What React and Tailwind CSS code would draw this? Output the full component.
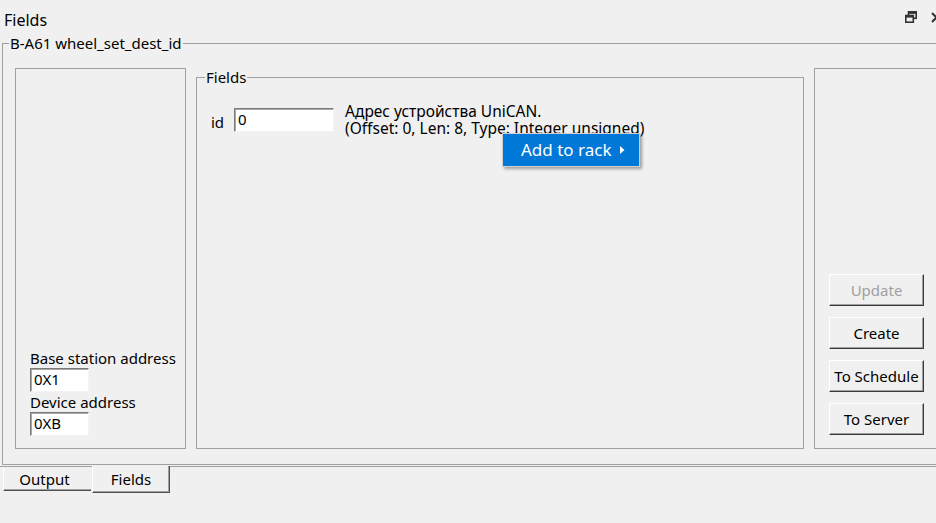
import { useState } from "react";

const FONT = { fontFamily: '"Noto Sans", "Liberation Sans", sans-serif' };

// sunken edit box, classic windows look
const Edit = ({ value, className }) => (
  <div
    className={`h-[24px] bg-white border border-t-[#7a7a7a] border-l-[#7a7a7a] border-r-[#f4f4f4] border-b-[#f4f4f4] shadow-[inset_1px_1px_0_#a8a8a8] pl-[3px] text-[15px] leading-[21px] text-black ${className}`}
  >
    {value}
  </div>
);

const Btn = ({ children, disabled }) => (
  <button
    className={`w-[95px] h-[32px] bg-[#f0f0f0] border border-t-white border-l-white border-r-[#3a3a3a] border-b-[#3a3a3a] shadow-[inset_-1px_-1px_0_#a0a0a0] text-[15px] leading-[20px] ${
      disabled ? "text-[#a0a0a0]" : "text-black"
    }`}
  >
    {children}
  </button>
);

const App = () => {
  const [tab, setTab] = useState("Fields");

  return (
    <div style={FONT} className="w-[936px] h-[523px] bg-[#f0f0f0] text-black overflow-hidden relative">
      {/* Title row */}
      <div className="h-[34px] flex items-start justify-between">
        <div className="pl-[4px] pt-[9px] text-[16px] leading-[22px]">Fields</div>
        <div className="flex items-center gap-[14px] pt-[11px] -mr-[6px]">
          <svg width="12" height="12" viewBox="0 0 12 12" fill="none" stroke="#333" strokeWidth="1.6">
            <rect x="3.5" y="0.8" width="7.7" height="6.5" />
            <rect x="0.8" y="4.5" width="7.5" height="6.7" fill="#f0f0f0" />
            <line x1="0.8" y1="5.6" x2="8.3" y2="5.6" strokeWidth="2" />
            <line x1="3.5" y1="1.9" x2="11.2" y2="1.9" strokeWidth="2" />
          </svg>
          <svg width="11" height="11" viewBox="0 0 11 11" stroke="#333" strokeWidth="2">
            <line x1="1" y1="1" x2="10" y2="10" />
            <line x1="10" y1="1" x2="1" y2="10" />
          </svg>
        </div>
      </div>

      {/* Outer group box */}
      <fieldset className="ml-[2px] w-[960px] h-[431px] border border-[#a0a0a0]">
        <legend className="ml-[6px] px-[1px] text-[15px] leading-[18px]">B-A61 wheel_set_dest_id</legend>

        <div className="flex pl-[12px] pt-[16px] gap-[10px] h-[397px]">
          {/* Left panel */}
          <div className="w-[171px] h-[381px] border border-[#a0a0a0] flex flex-col justify-end pl-[14px] pb-[12px]">
            <div className="text-[15px] leading-[20px]">Base station address</div>
            <Edit value="0X1" className="w-[59px]" />
            <div className="text-[15px] leading-[20px]">Device address</div>
            <Edit value="0XB" className="w-[59px]" />
          </div>

          {/* Fields group */}
          <fieldset className="w-[608px] h-[381px] border border-[#a0a0a0]">
            <legend className="ml-[8px] px-[1px] text-[15px] leading-[18px]">Fields</legend>
            <div className="flex items-start pl-[14px] pt-[22px]">
              <div className="text-[15px] leading-[24px] mr-[10px] mt-[2px]">id</div>
              <Edit value="0" className="w-[100px]" />
              <div className="ml-[11px] -mt-[5px] text-[15.5px] leading-[17px]">
                <div>Адрес устройства UniCAN.</div>
                <div>(Offset: 0, Len: 8, Type: Integer unsigned)</div>
              </div>
            </div>
          </fieldset>

          {/* Buttons panel */}
          <div className="w-[140px] h-[381px] border border-[#a0a0a0] flex flex-col justify-end gap-[11px] pl-[14px] pb-[13px]">
            <Btn disabled>Update</Btn>
            <Btn>Create</Btn>
            <Btn>To Schedule</Btn>
            <Btn>To Server</Btn>
          </div>
        </div>
      </fieldset>

      {/* Tabs */}
      <div className="mt-[1px] border-t border-[#a0a0a0] flex items-start pl-[3px]">
        {["Output", "Fields"].map((t) => {
          const active = tab === t;
          return (
            <button
              key={t}
              onClick={() => setTab(t)}
              className={
                active
                  ? "-mt-[1px] ml-[1px] w-[78px] h-[27px] bg-[#f0f0f0] border-l border-l-white border-r border-b border-r-[#505050] border-b-[#505050] shadow-[inset_-1px_-1px_0_#a0a0a0] text-[15px] leading-[22px]"
                  : "w-[88px] h-[24px] pr-[6px] border-l border-l-white border-b border-b-[#505050] shadow-[inset_0_-1px_0_#a0a0a0] text-[15px] leading-[20px]"
              }
            >
              {t}
            </button>
          );
        })}
      </div>

      {/* Context menu */}
      <div className="absolute left-[502px] top-[133px] w-[138px] h-[34px] border border-[#d0d0d0] bg-[#0078d7] shadow-[2px_2px_3px_rgba(0,0,0,0.35)] flex items-center text-white">
        <span className="pl-[18px] text-[17px] leading-[22px]">Add to rack</span>
        <svg className="ml-[8px]" width="5" height="8" viewBox="0 0 5 8">
          <path d="M0 0 L4.5 4 L0 8 Z" fill="white" />
        </svg>
      </div>
    </div>
  );
};

export default App;
